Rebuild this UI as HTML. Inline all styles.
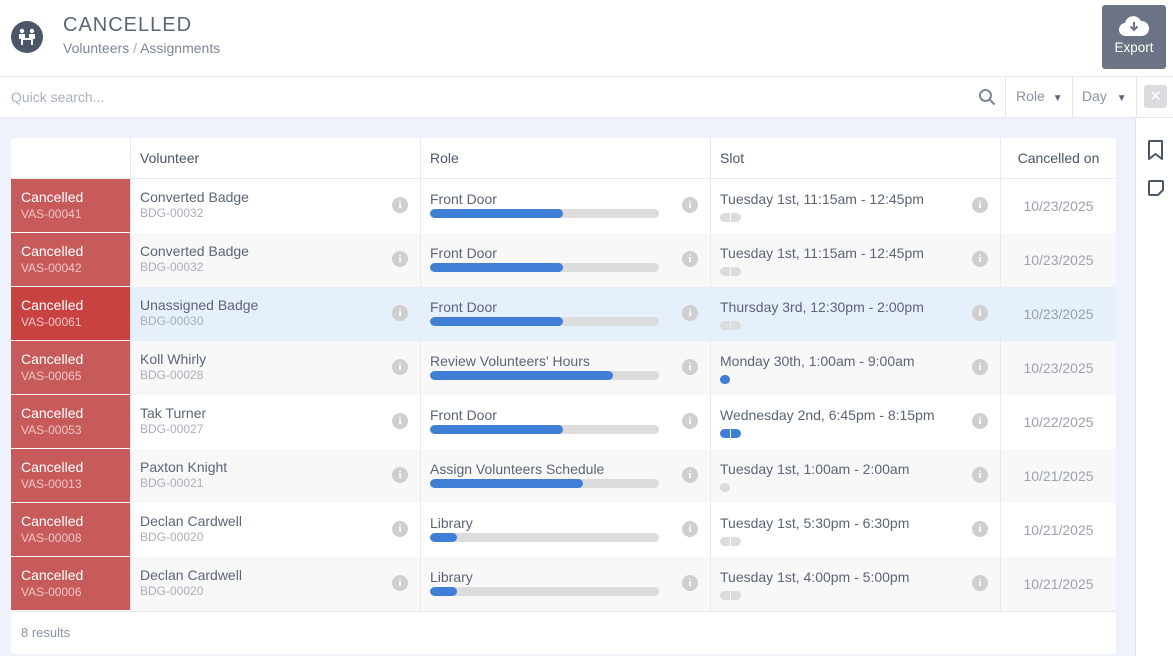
<!DOCTYPE html>
<html><head><style>
*{box-sizing:border-box;margin:0;padding:0}
body{width:1173px;height:656px;overflow:hidden;background:#fff;font-family:"Liberation Sans",sans-serif;color:#4a5568;position:relative}
.hdr{position:absolute;left:0;top:0;width:1173px;height:77px;border-bottom:1px solid #e6e8eb}
.logo{position:absolute;left:11px;top:21px;width:32px;height:32px;border-radius:50%;background:#4b5668}
.title{position:absolute;left:63px;top:14px;font-size:20px;letter-spacing:1px;color:#5b6577}
.crumb{position:absolute;left:63px;top:40px;font-size:14px;color:#7d8797}
.exp{position:absolute;left:1102px;top:5px;width:64px;height:64px;background:#6b7385;border-radius:3px;color:#fff;font-size:13.5px;text-align:center}
.bar{position:absolute;left:0;top:77px;width:1173px;height:41px;border-bottom:1px solid #e6e8eb}
.qs{position:absolute;left:11px;top:12px;font-size:14px;color:#aab1bc}
.dd{position:absolute;top:0;height:40px;border-left:1px solid #e6e8eb;font-size:14px;color:#8a93a2;padding:11px 0 0 11px}
.main{position:absolute;left:0;top:118px;width:1135px;height:538px;background:#eef3fb}
.side{position:absolute;left:1135px;top:118px;width:38px;height:538px;background:#fff;border-left:1px solid #e1e5ea}
.card{position:absolute;left:11px;top:20px;width:1105px;height:516px;background:#fff;border-radius:3px}
.row{position:absolute;left:0;width:1105px;height:54px}
.c{position:absolute;top:0;height:100%;border-left:1px solid #e8eaed}
.st{position:absolute;left:0;top:0;width:120px;height:53px;background:#c75b5b;color:#fff;padding:10px 10px}
.st b{font-weight:normal;font-size:14px;display:block}
.st span{font-size:12px;color:#f0c4c4}
.nm{font-size:14px;color:#5b6577;position:absolute;left:9px;top:10px;white-space:nowrap}
.sub{font-size:12px;color:#a9b0ba;position:absolute;left:9px;top:27px}
.i{position:absolute;top:18px;width:16px;height:16px;border-radius:50%;background:#cfcfcf;color:#fff;font-size:11px;font-weight:bold;text-align:center;line-height:16px;font-family:"Liberation Serif",serif}
.pb{position:absolute;left:9px;top:30px;width:229px;height:9px;border-radius:5px;background:#dcdcdc;overflow:hidden}
.pb div{height:100%;background:#3f7fd6;border-radius:5px}
.sl{position:absolute;left:9px;top:30px;height:9px}
.sl i{display:inline-block;width:10px;height:9px;margin-right:1px;background:#dcdcdc}
.sl i:first-child{border-radius:5px 0 0 5px}.sl i:last-child{border-radius:0 5px 5px 0;margin:0}
.sl i:only-child{border-radius:5px}
.dt{position:absolute;left:0;width:115px;text-align:center;top:19px;font-size:14px;color:#9aa2ae}
.th{position:absolute;top:0;height:41px;border-bottom:1px solid #e8eaed;font-size:14px;color:#4a5568;padding:12px 9px}
</style></head><body>
<div class="hdr">
<div class="logo"><svg width="32" height="32" viewBox="0 0 32 32"><g fill="#fff"><circle cx="11" cy="10" r="2.2"/><circle cx="21" cy="10" r="2.2"/><path d="M8 13h6v4h4v-4h6v5h-2v6h-2v-5h-8v5h-2v-6H8z"/></g></svg></div>
<div class="title">CANCELLED</div>
<div class="crumb">Volunteers <span style="color:#aab">/</span> Assignments</div>
<div class="exp"><svg width="32" height="26" viewBox="0 0 32 26" style="margin-top:9px"><path d="M8 22a6.5 6.5 0 0 1-1-13 8.5 8.5 0 0 1 16-2 7 7 0 0 1 1 15z" fill="#fff"/><path d="M16 8v8m-3.5-3.5L16 16l3.5-3.5" stroke="#6b7385" stroke-width="2" fill="none"/></svg><div style="margin-top:-3px">Export</div></div>
</div>
<div class="bar">
<div class="qs">Quick search...</div>
<svg style="position:absolute;left:978px;top:11px" width="18" height="18" viewBox="0 0 18 18"><circle cx="7.5" cy="7.5" r="5.5" stroke="#7d8797" stroke-width="2" fill="none"/><path d="M11.5 11.5l5 5" stroke="#7d8797" stroke-width="2.2"/></svg>
<div class="dd" style="left:1005px;width:67px;padding-left:10px">Role <span style="font-size:10px;color:#5b6577;margin-left:4px">&#9660;</span></div>
<div class="dd" style="left:1072px;width:64px;padding-left:9px">Day <span style="font-size:10px;color:#5b6577;margin-left:6px">&#9660;</span></div>
<div style="position:absolute;left:1136px;top:0;width:1px;height:40px;background:#e6e8eb"></div>
<div style="position:absolute;left:1144px;top:8px;width:23px;height:23px;background:#dadce0;border-radius:3px;color:#fff;text-align:center;line-height:23px;font-size:15px">✕</div>
</div>
<div class="main">
<div class="card">
<div class="th" style="left:0;width:120px"></div>
<div class="th" style="left:119px;width:290px;border-left:1px solid #e8eaed">Volunteer</div>
<div class="th" style="left:409px;width:290px;border-left:1px solid #e8eaed">Role</div>
<div class="th" style="left:699px;width:290px;border-left:1px solid #e8eaed">Slot</div>
<div class="th" style="left:989px;width:116px;border-left:1px solid #e8eaed;text-align:center;padding-left:0;padding-right:0">Cancelled on</div>
<div id="rows"></div>
<div style="position:absolute;left:0;top:473px;width:1105px;border-top:1px solid #e8eaed;padding:13px 10px;font-size:13px;color:#8a93a2">8 results</div>
</div>
</div>
<div class="side">
<svg style="position:absolute;left:11px;top:21px" width="18" height="22" viewBox="0 0 18 22"><path d="M2 2h13v18l-6.5-5L2 20z" fill="none" stroke="#4b5668" stroke-width="2" stroke-linejoin="round"/></svg>
<svg style="position:absolute;left:11px;top:61px" width="18" height="18" viewBox="0 0 18 18"><path d="M3 2h12a1 1 0 0 1 1 1v8l-5 5H3a1 1 0 0 1-1-1V3a1 1 0 0 1 1-1z" fill="none" stroke="#4b5668" stroke-width="2" stroke-linejoin="round"/></svg>
</div>
<script>
const d=[["VAS-00041","Converted Badge","BDG-00032","Front Door",58,"Tuesday 1st, 11:15am - 12:45pm","gg","10/23/2025"],
["VAS-00042","Converted Badge","BDG-00032","Front Door",58,"Tuesday 1st, 11:15am - 12:45pm","gg","10/23/2025"],
["VAS-00061","Unassigned Badge","BDG-00030","Front Door",58,"Thursday 3rd, 12:30pm - 2:00pm","gg","10/23/2025"],
["VAS-00065","Koll Whirly","BDG-00028","Review Volunteers' Hours",80,"Monday 30th, 1:00am - 9:00am","b","10/23/2025"],
["VAS-00053","Tak Turner","BDG-00027","Front Door",58,"Wednesday 2nd, 6:45pm - 8:15pm","bb","10/22/2025"],
["VAS-00013","Paxton Knight","BDG-00021","Assign Volunteers Schedule",67,"Tuesday 1st, 1:00am - 2:00am","g","10/21/2025"],
["VAS-00008","Declan Cardwell","BDG-00020","Library",12,"Tuesday 1st, 5:30pm - 6:30pm","gg","10/21/2025"],
["VAS-00006","Declan Cardwell","BDG-00020","Library",12,"Tuesday 1st, 4:00pm - 5:00pm","gg","10/21/2025"]];
let h="";d.forEach((r,k)=>{const bg=k==2?"#e5f0fc":(k%2?"#f8f8f8":"#fff");const sc=k==2?"#c94242":"#c75b5b";
const sl=[...r[6]].map(c=>`<i style="background:${c=="b"?"#3f7fd6":"#dcdcdc"}"></i>`).join("");
h+=`<div class="row" style="top:${41+k*54}px;background:${bg}">
<div class="st" style="background:${sc}"><b>Cancelled</b><span>${r[0]}</span></div>
<div class="c" style="left:119px;width:290px"><div class="nm">${r[1]}</div><div class="sub">${r[2]}</div><div class="i" style="left:261px">i</div></div>
<div class="c" style="left:409px;width:290px"><div class="nm" style="top:12px">${r[3]}</div><div class="pb"><div style="width:${r[4]}%"></div></div><div class="i" style="left:261px">i</div></div>
<div class="c" style="left:699px;width:290px"><div class="nm" style="top:12px">${r[5]}</div><div class="sl">${sl}</div><div class="i" style="left:261px">i</div></div>
<div class="c" style="left:989px;width:116px"><div class="dt">${r[7]}</div></div>
${k<7?'<div style="position:absolute;left:0;bottom:0;width:120px;height:1px;background:#fff"></div>':''}</div>`});
document.getElementById("rows").innerHTML=h;
</script>
</body></html>
